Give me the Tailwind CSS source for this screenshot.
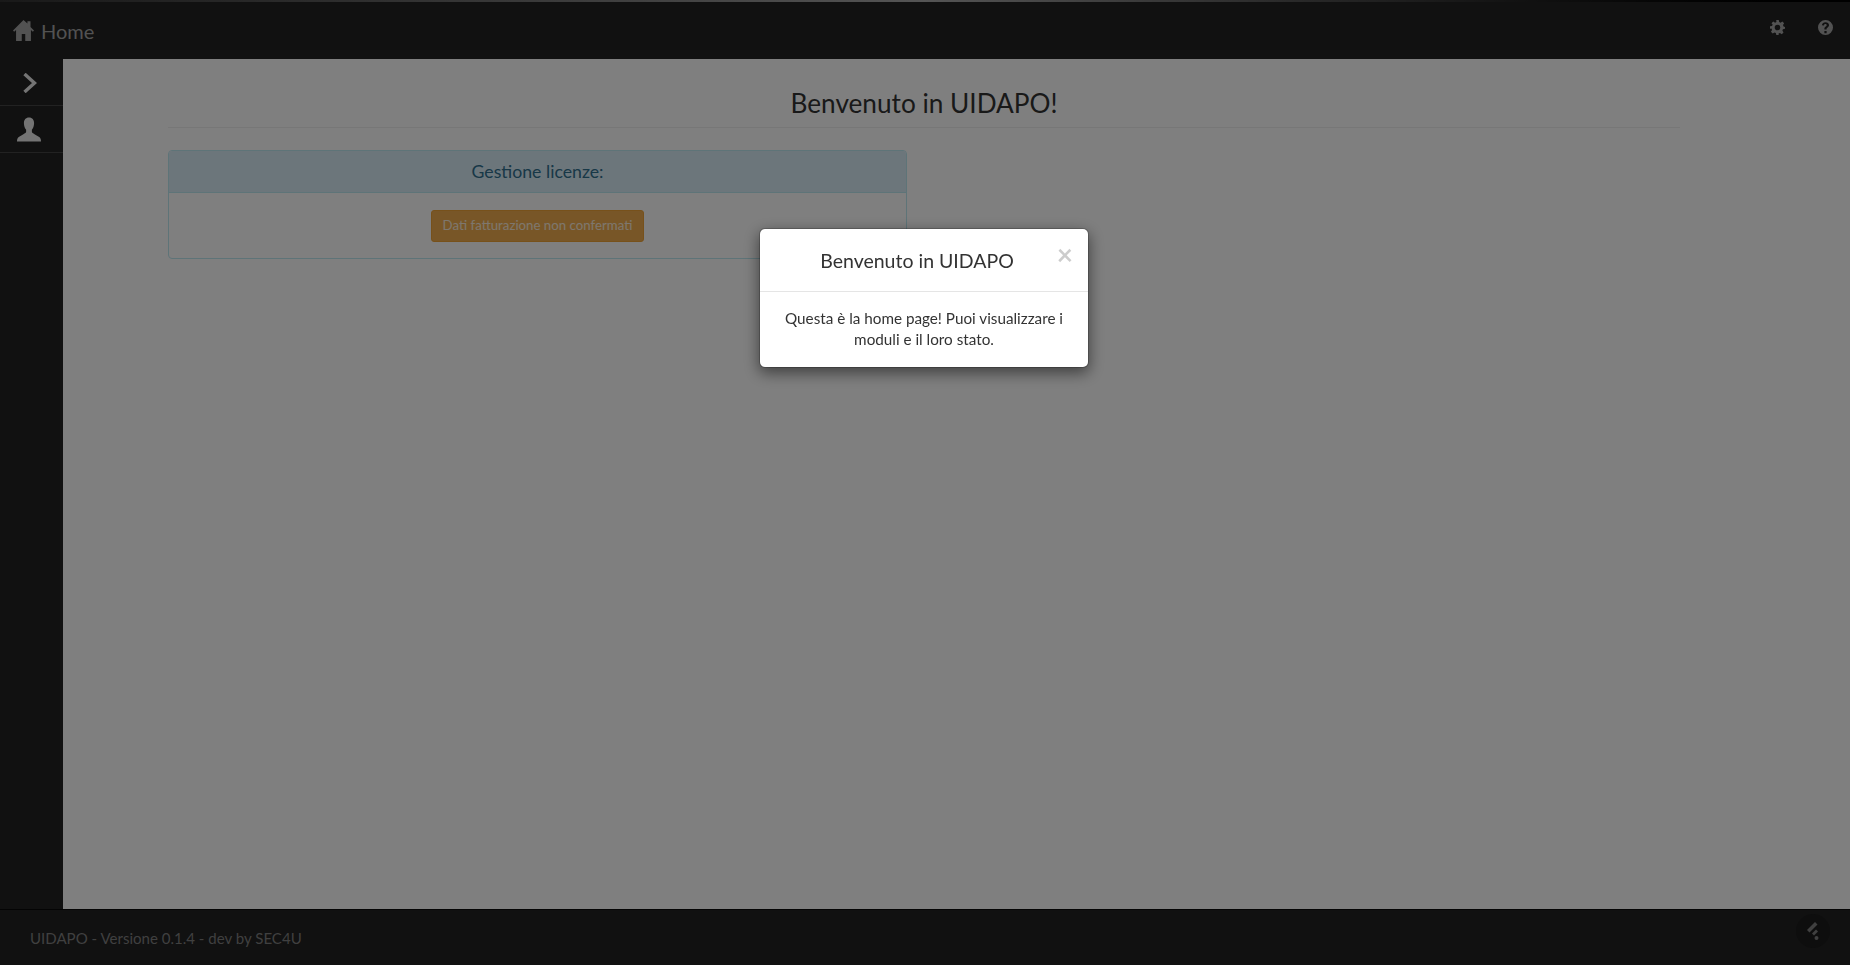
<!DOCTYPE html>
<html lang="it">
<head>
    <meta charset="UTF-8">
    <title>UIDAPO</title>
    <script src="https://cdn.jsdelivr.net/npm/@tailwindcss/browser@4"></script>
</head>
<body class="bg-white text-[#333] h-screen overflow-hidden font-['Lato',sans-serif]">
    <div class="flex flex-col h-[965px]">
        <!-- Navbar -->
        <header class="h-[59px] shrink-0 bg-[#222] flex flex-col text-[#a5a5a5]">
            <div class="h-[2px] bg-gradient-to-r from-[#333] via-[#aaa] to-[#000]"></div>
            <div class="flex-1 flex items-center justify-between">
                <div class="flex items-center pl-[13px] gap-[7px]">
                    <svg class="w-[21px] h-[21px] -mt-[1px]" viewBox="0 0 24 24" fill="currentColor"><path d="M12 0 0 12l1.300 1.400L3.500 11.300V24h6.500v-8h4v8h6.500V11.300l2.200 2.100L24 12l-4-4V1.500h-3.500V4z"/></svg>
                    <span class="text-[20px] leading-none mt-[1px]">Home</span>
                </div>
                <div class="flex items-center gap-[33px] pr-[17px] -mt-[6px]">
                    <svg class="w-[15px] h-[15px]" viewBox="0 0 24 24" fill="currentColor"><path fill-rule="evenodd" d="M10 0h4l.7 3.300 2.200.9L19.800 2.400l2.800 2.800-1.800 2.900.9 2.200L24 11v3l-3.300.7-.9 2.200 1.800 2.900-2.800 2.800-2.900-1.800-2.200.9L13.900 24h-3.800l-.7-3.300-2.200-.9-2.900 1.800-2.800-2.800 1.800-2.900-.9-2.200L0 13.900v-3.800l3.300-.7.9-2.200L2.400 5.200l2.800-2.800 2.900 1.800 2.200-.9zM12 7.500a4.500 4.500 0 1 0 0 9 4.500 4.500 0 0 0 0-9z"/></svg>
                    <svg class="w-[15px] h-[15px]" viewBox="0 0 24 24" fill="currentColor"><path fill-rule="evenodd" d="M12 0a12 12 0 1 1 0 24 12 12 0 0 1 0-24zM10.200 17.500v3.500h3.600v-3.500zM12 3.500c-3.200 0-5.400 1.700-5.800 4.700l3.400.5c.2-1.500 1-2.200 2.300-2.200 1.200 0 2 .7 2 1.700 0 .9-.5 1.400-1.500 2.100-1.600 1.100-2.200 2.100-2.200 3.700v1h3.500v-.7c0-.9.300-1.300 1.300-2 1.700-1.200 2.600-2.400 2.600-4.300 0-2.700-2.300-4.500-5.600-4.500z"/></svg>
                </div>
            </div>
        </header>

        <div class="flex flex-1 min-h-0">
            <!-- Sidebar -->
            <aside class="w-[63px] shrink-0 bg-[#222] text-[#e8e8e8]">
                <div class="h-[47px] pt-[1px] flex items-center pl-[23px] border-b border-[#444]">
                    <svg class="w-[14px] h-[20px]" viewBox="0 0 14 20" fill="none" stroke="currentColor" stroke-width="3.400"><path d="M1.500 1 11.500 10 1.500 19"/></svg>
                </div>
                <div class="h-[47px] flex items-center pl-[17px] border-b border-[#444]">
                    <svg class="w-[24px] h-[25px]" viewBox="0 0 25 25" fill="currentColor"><path d="M12.500 0c3.500 0 5.300 2.500 5.300 5.700 0 3-1 5.700-2.300 7v2.300c0 1 4.800 3.200 8 5.600 1 .8 1.500 2.400 1.500 4.400H0c0-2 .5-3.600 1.500-4.400 3.200-2.400 8-4.600 8-5.600v-2.300c-1.300-1.300-2.300-4-2.300-7C7.200 2.500 9 0 12.500 0z"/></svg>
                </div>
            </aside>

            <!-- Main content -->
            <main class="flex-1 pl-[105px] pr-[170px]">
                <div class="h-[69px] pt-[26px] border-b border-[#eee] flex justify-center">
                    <h1 class="text-[26.200px] leading-[37px]">Benvenuto in UIDAPO!</h1>
                </div>
                <section class="w-[739px] h-[109px] mt-[22px] border border-[#bce8f1] rounded-[4px] overflow-hidden">
                    <div class="h-[42px] pt-[1px] bg-[#d9edf7] border-b border-[#bce8f1] text-[#31708f] text-[17.700px] flex items-center justify-center">Gestione licenze:</div>
                    <div class="flex justify-center pt-[17px]">
                        <button class="h-[32px] w-[213px] bg-[#f0ad4e] border border-[#eea236] rounded-[3px] text-white/80 text-[13.250px]">Dati fatturazione non confermati</button>
                    </div>
                </section>
            </main>
        </div>

        <!-- Footer -->
        <footer class="h-[56px] shrink-0 bg-[#222] border-t border-[#080808] flex items-center justify-between pl-[30px] pr-[20px] text-[#808080]">
            <span class="text-[15.050px] mt-[2px]">UIDAPO - Versione 0.1.4 - dev by SEC4U</span>
            <div class="w-[34px] h-[34px] rounded-full bg-[#1c1c1c] flex items-center justify-center -mt-[14px]">
                <svg class="w-[14px] h-[20px]" viewBox="0 0 14 20" fill="currentColor"><path d="M1 9 9 1l2.500 2.500-8 8zM6 12.500l4-4 2 2-4 4zM10.500 19a2 2 0 1 0 0-4 2 2 0 0 0 0 4z"/></svg>
            </div>
        </footer>
    </div>

    <!-- Modal backdrop -->
    <div class="fixed inset-0 bg-black/50"></div>
    <div class="fixed left-[759px] top-[228px] w-[330px] h-[140px] bg-white rounded-[6px] border border-black/20 shadow-[0_5px_15px_rgba(0,0,0,0.5)] bg-clip-padding">
        <div class="h-[63px] pt-[2px] border-b border-[#e5e5e5] relative flex items-center justify-center pr-[14px]">
            <h4 class="text-[19.500px] leading-none">Benvenuto in UIDAPO</h4>
            <span class="absolute right-[15px] top-[11px] text-[28px] font-bold leading-none text-black/20">×</span>
        </div>
        <p class="px-[15px] pt-[16px] text-center text-[15.250px] leading-[21px]">Questa è la home page! Puoi visualizzare i moduli e il loro stato.</p>
    </div>
</body>
</html>
